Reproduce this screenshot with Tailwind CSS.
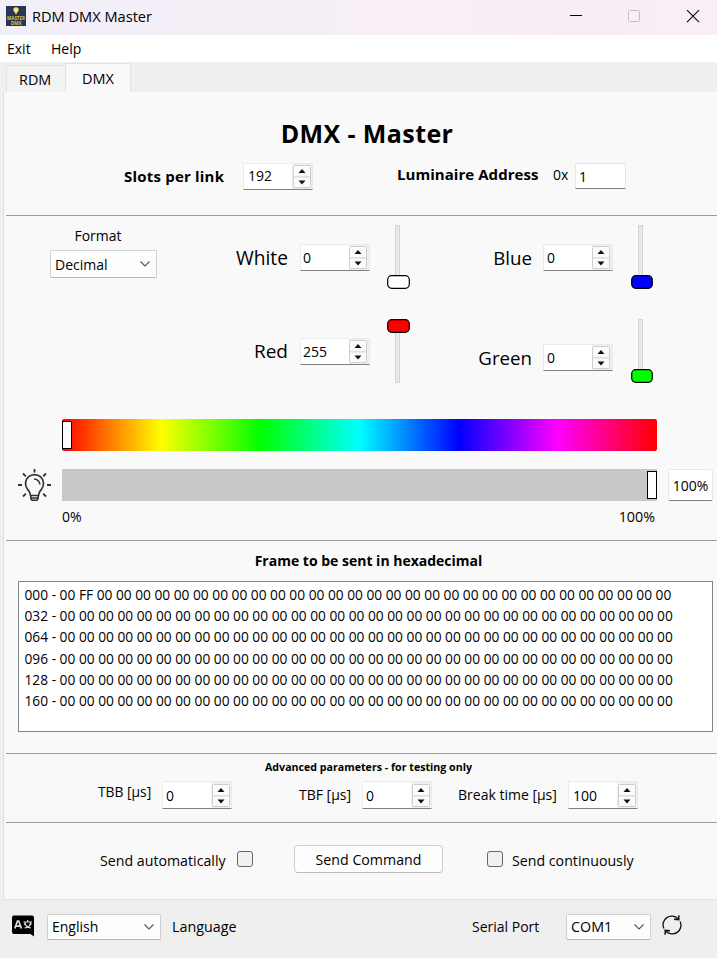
<!DOCTYPE html>
<html lang="en">
<head>
<meta charset="utf-8">
<title>RDM DMX Master</title>
<script src="https://cdn.jsdelivr.net/npm/@tailwindcss/browser@4"></script>
</head>
<body class="w-[717px] h-[958px] overflow-hidden bg-[#efefef] font-['Open_Sans','Noto_Sans',sans-serif] text-[14px] leading-5 text-black whitespace-nowrap">
<svg class="hidden">
  <symbol id="steps" viewBox="0 0 18 23">
    <rect x=".5" y=".5" width="17" height="22" rx="1" fill="#fbfbfb" stroke="#cfcfcf"/>
    <path d="M0 11.900H18" stroke="#cfcfcf"/>
    <path d="M5.500 8L9 4L12.500 8ZM5.500 15.500H12.500L9 19.500Z" fill="#111"/>
  </symbol>
  <symbol id="chev" viewBox="0 0 10 6"><path d="M.5.5L5 5L9.500.5" fill="none" stroke="#555" stroke-width="1.100"/></symbol>
</svg>

<header class="flex h-[35px] items-center bg-linear-to-r from-[#f1eff7] via-[#f7eef7] to-[#f9edf6] pl-1.5">
  <svg class="mt-[-3px] h-5 w-5" viewBox="0 0 20 20">
    <rect width="20" height="20" fill="#2b3656"/>
    <circle cx="10" cy="3.800" r="2.600" fill="#ffe76b"/><rect x="9" y="6" width="2" height="2" fill="#d9c877"/>
    <text x="1" y="14.300" font-size="4.600" font-weight="700" textLength="18" lengthAdjust="spacingAndGlyphs" fill="#d2c644">MASTER</text>
    <text x="5" y="18.500" font-size="4.600" font-weight="700" textLength="10.500" lengthAdjust="spacingAndGlyphs" fill="#d2c644">DMX</text>
  </svg>
  <span class="ml-1.5 mt-[-4px] w-[500px] text-[14.600px]">RDM DMX Master</span>
  <svg class="mt-[-3px] ml-[37px] h-4 w-[132px]" viewBox="0 0 132 16" fill="none">
    <path d="M1 7.500H13" stroke="#000"/>
    <rect x="59.500" y="2.500" width="11" height="11" rx="1" stroke="#c9bfc9"/>
    <path d="M118 2.200L130 14.200M130 2.200L118 14.200" stroke="#111" stroke-width="1.200"/>
  </svg>
</header>

<nav class="flex h-[27px] items-center bg-white pl-[7px]">
  <span class="w-[44px]">Exit</span><span>Help</span>
</nav>

<div class="flex h-[30px] items-end pl-1.5">
  <div class="flex h-[27px] w-[59px] items-center border border-r-0 border-b-0 border-[#e3e3e3] bg-[#f3f3f3] pt-0.5 pl-[12px] text-[14.400px]">RDM</div>
  <div class="flex h-[29px] w-[66px] items-center border border-b-0 border-[#e3e3e3] bg-[#f9f9f9] pt-0.5 pl-4 text-[14.500px]">DMX</div>
</div>

<main class="ml-[3px] h-[808px] border-b border-l border-[#e2e2e2] bg-[#f9f9f9] pl-0.5">
  <section class="h-[124px] border-b border-[#9c9c9c]">
    <h1 class="w-[722px] pt-[25px] text-center text-[25px] leading-8 font-bold tracking-[0.4px]">DMX - Master</h1>
    <div class="mt-[14px] flex items-start">
      <span class="mt-[3px] ml-[118px] w-[119px] text-[15px] font-bold tracking-[0.2px]">Slots per link</span>
      <div class="flex h-[27px] w-[70px] justify-between border border-[#ebebeb] border-b-[#808080] bg-[#efefef]"><span class="w-[48px] bg-white pt-[2px] pl-[4px]">192</span><svg class="mt-px mr-px h-[23px] w-[18px]"><use href="#steps"/></svg></div>
      <span class="mt-[1px] ml-[84px] w-[156px] text-[15px] font-bold tracking-[0.05px]">Luminaire Address</span>
      <span class="mt-[2px] w-[22px]">0x</span>
      <div class="h-[26px] w-[51px] border border-[#e6e6e6] border-b-[#808080] bg-white pt-[3px] pl-[3px]">1</div>
    </div>
  </section>

  <section class="h-[325px] border-b border-[#9c9c9c]">
    <div class="flex h-[203px] items-start">
      <div class="ml-[44px] w-[107px] pt-[10px]">
        <div class="w-[96px] text-center">Format</div>
        <div class="mt-1 flex h-7 items-center justify-between rounded-xs border border-[#d0d0d0] border-b-[#b8b8b8] bg-[#fdfdfd] pr-1.5 pl-1"><span class="mt-px">Decimal</span><svg class="h-1.5 w-2.5"><use href="#chev"/></svg></div>
      </div>
      <div class="ml-[63px] flex w-[150px] flex-col gap-[67px] pt-7">
        <div class="flex h-[27px] justify-end gap-3"><span class="text-[19.200px] leading-[27px]">White</span>
          <div class="flex h-[27px] w-[70px] justify-between border border-[#ebebeb] border-b-[#808080] bg-[#efefef]"><span class="w-[48px] bg-white pt-[3px] pl-[2px]">0</span><svg class="mt-px mr-[2px] h-[23px] w-[18px]"><use href="#steps"/></svg></div></div>
        <div class="flex h-[27px] justify-end gap-3"><span class="text-[19px] leading-[27px]">Red</span>
          <div class="flex h-[27px] w-[70px] justify-between border border-[#ebebeb] border-b-[#808080] bg-[#efefef]"><span class="w-[48px] bg-white pt-[3px] pl-[2px]">255</span><svg class="mt-px mr-[2px] h-[23px] w-[18px]"><use href="#steps"/></svg></div></div>
      </div>
      <svg class="mt-[9px] ml-[17px] h-[160px] w-6" viewBox="0 0 24 160">
        <rect x="8.500" y=".5" width="4" height="60" fill="#e7eaea" stroke="#d3d6d6"/><rect x=".7" y="50.700" width="21.600" height="12.600" rx="4" fill="#fff" stroke="#000" stroke-width="1.200"/>
        <rect x="8.500" y="98.500" width="4" height="59" fill="#e7eaea" stroke="#d3d6d6"/><rect x=".7" y="94.700" width="21.600" height="12.600" rx="4" fill="red" stroke="#000" stroke-width="1.200"/>
      </svg>
      <div class="ml-[52px] flex w-[150px] flex-col gap-[73px] pt-7">
        <div class="flex h-[27px] justify-end gap-[11px]"><span class="text-[18.700px] leading-[27px]">Blue</span>
          <div class="flex h-[27px] w-[70px] justify-between border border-[#ebebeb] border-b-[#808080] bg-[#efefef]"><span class="w-[48px] bg-white pt-[3px] pl-[3px]">0</span><svg class="mt-px mr-[2px] h-[23px] w-[18px]"><use href="#steps"/></svg></div></div>
        <div class="flex h-[27px] justify-end gap-[11px]"><span class="text-[18.700px] leading-[27px]">Green</span>
          <div class="flex h-[27px] w-[70px] justify-between border border-[#ebebeb] border-b-[#808080] bg-[#efefef]"><span class="w-[48px] bg-white pt-[3px] pl-[3px]">0</span><svg class="mt-px mr-[2px] h-[23px] w-[18px]"><use href="#steps"/></svg></div></div>
      </div>
      <svg class="mt-[9px] ml-[18px] h-[160px] w-6" viewBox="0 0 24 160">
        <rect x="7.500" y=".5" width="4" height="60" fill="#e7eaea" stroke="#d3d6d6"/><rect x=".7" y="50.700" width="20.600" height="12.600" rx="4" fill="#00f" stroke="#000" stroke-width="1.200"/>
        <rect x="7.500" y="94.500" width="4" height="60" fill="#e7eaea" stroke="#d3d6d6"/><rect x=".7" y="144.700" width="20.600" height="12.600" rx="4" fill="#0f0" stroke="#000" stroke-width="1.200"/>
      </svg>
    </div>
    <div class="ml-14 flex h-8 w-[595px] items-center rounded-xs bg-[linear-gradient(90deg,#f00,#ff0_16.67%,#0f0_33.33%,#0ff_50%,#00f_66.67%,#f0f_83.33%,#f00)]">
      <i class="h-7 w-2.5 border border-black bg-white"></i>
    </div>
    <div class="mt-[18px] flex h-8 pl-3">
      <svg class="h-8 w-[33px]" viewBox="0 0 33 32" fill="none" stroke="#333">
        <path d="M12.500 26.500C12.500 23.500 11 22 9.500 20.200A9 9 0 1 1 23.500 20.200C22 22 20.500 23.500 20.500 26.500Z" stroke-width="1.700"/>
        <path d="M12.800 26.500V29.500L14 31.300H19L20.200 29.500V26.500M12.800 29H20.200M16 10A6 6 0 0 1 22 15.500" stroke-width="1.500"/>
        <path d="M16.500 0V3.500M0 16H4M29 16H33M5 4.500L7.800 7.300M28 4.500L25.200 7.300M5 27.500L7.800 24.700M28 27.500L25.200 24.700" stroke-width="1.800"/>
      </svg>
      <div class="ml-[11px] flex w-[595px] items-center justify-end bg-[#c8c8c8]"><i class="h-7 w-2.5 border border-black bg-white"></i></div>
      <div class="ml-[11px] w-[45px] rounded-xs border border-[#e8e8e8] border-b-[#808080] bg-white pt-[6px] text-center">100%</div>
    </div>
    <div class="ml-14 flex w-[593px] justify-between pt-[6px]"><span>0%</span><span class="text-[14.300px]">100%</span></div>
  </section>

  <section class="h-[213px] border-b border-[#9c9c9c] pt-[10px]">
    <h2 class="w-[725px] text-center text-[14px] font-bold">Frame to be sent in hexadecimal</h2>
    <pre class="mt-[10px] ml-3 h-[151px] w-[695px] border border-[#7f858f] bg-white pt-[2px] pl-[5.500px] font-['Open_Sans','Noto_Sans',sans-serif] text-[13.740px] leading-[21.200px]">000 - 00 FF 00 00 00 00 00 00 00 00 00 00 00 00 00 00 00 00 00 00 00 00 00 00 00 00 00 00 00 00 00 00
032 - 00 00 00 00 00 00 00 00 00 00 00 00 00 00 00 00 00 00 00 00 00 00 00 00 00 00 00 00 00 00 00 00
064 - 00 00 00 00 00 00 00 00 00 00 00 00 00 00 00 00 00 00 00 00 00 00 00 00 00 00 00 00 00 00 00 00
096 - 00 00 00 00 00 00 00 00 00 00 00 00 00 00 00 00 00 00 00 00 00 00 00 00 00 00 00 00 00 00 00 00
128 - 00 00 00 00 00 00 00 00 00 00 00 00 00 00 00 00 00 00 00 00 00 00 00 00 00 00 00 00 00 00 00 00
160 - 00 00 00 00 00 00 00 00 00 00 00 00 00 00 00 00 00 00 00 00 00 00 00 00 00 00 00 00 00 00 00 00</pre>
  </section>

  <section class="h-[69px] border-b border-[#9c9c9c] pt-[5px]">
    <h3 class="w-[725px] text-center text-[10.650px] leading-4 font-bold">Advanced parameters - for testing only</h3>
    <div class="mt-[6px] flex items-start pl-[92px]">
      <span class="mt-[1px] w-[64px] text-[13.800px]">TBB [µs]</span>
      <div class="flex h-[28px] w-[70px] justify-between border border-[#ebebeb] border-b-[#808080] bg-[#efefef]"><span class="w-[48px] bg-white pt-[4px] pl-[3px]">0</span><svg class="mt-[2px] mr-px h-[23px] w-[18px]"><use href="#steps"/></svg></div>
      <span class="mt-[4px] ml-[67px] w-[63px]">TBF [µs]</span>
      <div class="flex h-[28px] w-[70px] justify-between border border-[#ebebeb] border-b-[#808080] bg-[#efefef]"><span class="w-[48px] bg-white pt-[4px] pl-[3px]">0</span><svg class="mt-[2px] mr-px h-[23px] w-[18px]"><use href="#steps"/></svg></div>
      <span class="mt-[4px] ml-[26px] w-[110px]">Break time [µs]</span>
      <div class="flex h-[28px] w-[70px] justify-between border border-[#ebebeb] border-b-[#808080] bg-[#efefef]"><span class="w-[48px] bg-white pt-[4px] pl-[4px]">100</span><svg class="mt-[2px] mr-px h-[23px] w-[18px]"><use href="#steps"/></svg></div>
    </div>
  </section>

  <section class="flex items-start pt-[22px] pl-[94px]">
    <span class="mt-[6px] w-[137px] text-[14.200px]">Send automatically</span>
    <i class="mt-[6px] h-4 w-4 rounded-[3px] border border-[#666] bg-[#f1f1f1]"></i>
    <div class="ml-[41px] h-7 w-[149px] rounded border border-[#d0d0d0] border-b-[#bbb] bg-[#fdfdfd] pt-[4px] text-center text-[14.200px]">Send Command</div>
    <i class="mt-[6px] ml-[44px] h-4 w-4 rounded-[3px] border border-[#666] bg-[#f1f1f1]"></i>
    <span class="mt-[6px] ml-[9px] text-[14.200px]">Send continuously</span>
  </section>
</main>

<footer class="flex h-[53px] items-center pl-[11px]">
  <svg class="-mt-0.5 h-6 w-6" viewBox="0 0 24 24" fill="none">
    <path d="M3 1.500H21Q23 1.500 23 3.500V22.500L19.500 20H3Q1 20 1 18V3.500Q1 1.500 3 1.500Z" fill="#000"/>
    <path d="M3.800 14.500L6.500 7H7.700L10.400 14.500M5 12.200H9.200" stroke="#ddd" stroke-width="1.700"/>
    <path d="M12.500 8H21M16.700 6V8M14 8.300C14 11 15.500 13.500 20 14M19.500 8.300C19.500 11 18 13.500 13.500 14M14.500 11L13 9.500M19 11L20.500 9.500" stroke="#ddd" stroke-width="1.200"/>
  </svg>
  <div class="ml-3 flex h-[26px] w-[114px] items-center justify-between rounded-xs border border-[#cfcfcf] border-b-[#b8b8b8] bg-[#fdfdfd] pr-1.5 pl-1"><span class="mt-px">English</span><svg class="h-1.5 w-2.5"><use href="#chev"/></svg></div>
  <span class="mt-px ml-[11px] w-[300px] text-[14.300px]">Language</span>
  <span class="mt-px w-[94px]">Serial Port</span>
  <div class="flex h-[26px] w-[85px] items-center justify-between rounded-xs border border-[#cfcfcf] border-b-[#b8b8b8] bg-[#fdfdfd] pr-1.5 pl-1"><span class="mt-px text-[14.300px]">COM1</span><svg class="h-1.5 w-2.5"><use href="#chev"/></svg></div>
  <svg class="-mt-[3px] ml-[11px] h-5 w-5" viewBox="0 0 20 20" fill="none" stroke="#111" stroke-width="1.300">
    <path d="M1.900 13.500A8.700 8.700 0 0 1 16 3.700M18.100 6.500A8.700 8.700 0 0 1 4 16.300"/>
    <path d="M16.800.3V4.600L12 4.300M3.200 19.700V15.400L8 15.700" stroke-width="1.500"/>
  </svg>
</footer>
</body>
</html>
